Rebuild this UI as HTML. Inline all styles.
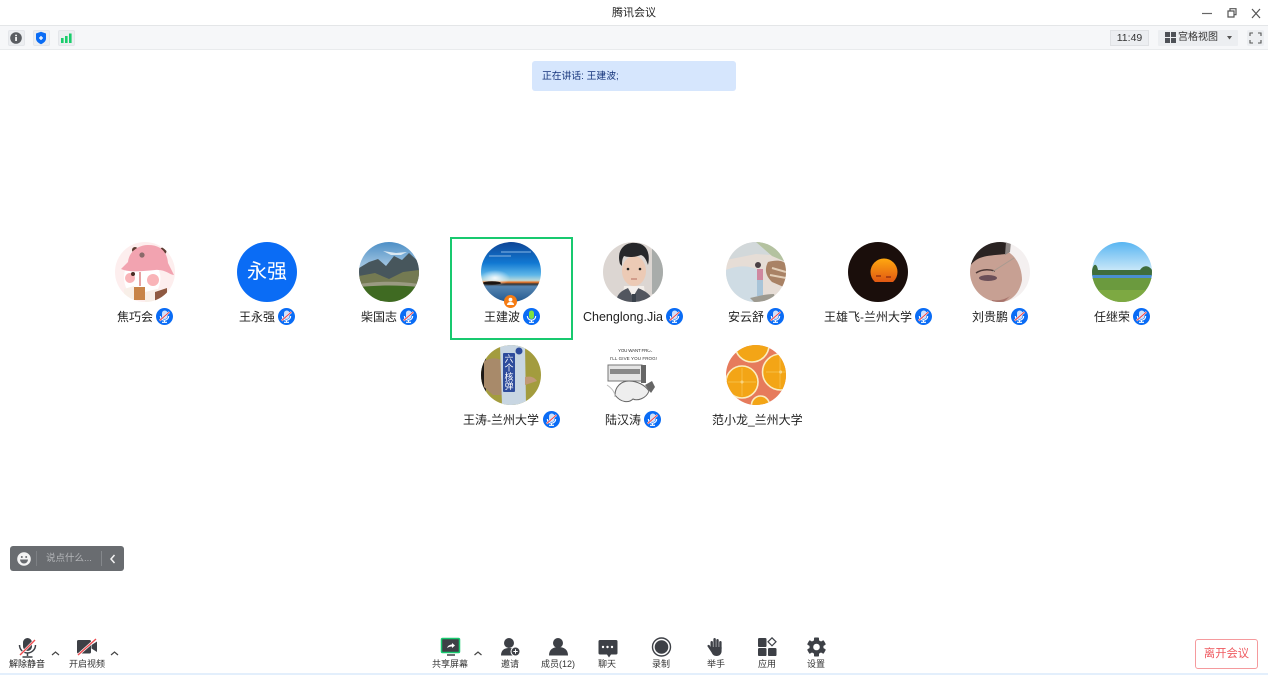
<!DOCTYPE html>
<html lang="zh"><head><meta charset="utf-8"><title>腾讯会议</title>
<style>
*{box-sizing:border-box}
html,body{margin:0;padding:0;width:1268px;height:675px;overflow:hidden;background:#fff;font-family:"Liberation Sans","Noto Sans CJK SC",sans-serif;color:#222}
.a{position:absolute}
.t{position:absolute;white-space:nowrap;line-height:14px}
.n{font-size:12px;color:#222;top:310px}
.n2{top:413px}
.l{font-size:9px;color:#333;top:658px;transform:translateX(-50%);line-height:12px}
.av{position:absolute;width:60px;height:60px;border-radius:50%;overflow:hidden}
.av svg{display:block}
.mic{position:absolute;width:17px;height:17px}
.ic{position:absolute}
.box{position:absolute;top:30px;width:17px;height:16px;background:#eceef1;border:1px solid #e4e6ea;border-radius:2px}
</style></head><body>
<svg width="0" height="0" style="position:absolute"><defs>
<symbol id="m" viewBox="0 0 17 17"><circle cx="8.5" cy="8.5" r="8.5" fill="#0a6cf5"/><rect x="6" y="2.500" width="5.500" height="8.500" rx="2.700" fill="#cfe0fb"/><path d="M4.300 8a4.200 4.200 0 0 0 8.400 0M8.500 12.300v1.800M6 14.300h5" stroke="#fff" stroke-width="1.100" fill="none"/><path d="M3.600 12.600 13.400 4" stroke="#fff" stroke-width="2"/><path d="M3.600 12.600 13.400 4" stroke="#e8474f" stroke-width="1.100"/></symbol>
</defs></svg>

<!-- title bar -->
<div class="a" style="left:0;top:0;width:1268px;height:26px;background:#fff;border-bottom:1px solid #e4e6e8"></div>
<div class="t" style="left:0;width:1268px;text-align:center;top:6px;font-size:11px;color:#222">腾讯会议</div>
<svg class="ic" style="left:1198px;top:5px" width="66" height="16"><path d="M4 8.500h10" stroke="#666" stroke-width="1.200"/><path d="M30 6h6v6h-6zM32 6V3.700h6v6h-2" stroke="#555" stroke-width="1.200" fill="none"/><path d="M54 4l8 9M62 4l-8 9" stroke="#555" stroke-width="1.200"/></svg>

<!-- toolbar -->
<div class="a" style="left:0;top:26px;width:1268px;height:24px;background:#f6f7f9;border-bottom:1px solid #e9ebed"></div>
<div class="box" style="left:8px"></div><div class="box" style="left:33px"></div><div class="box" style="left:58px"></div>
<svg class="ic" style="left:8px;top:30px" width="70" height="16">
<circle cx="8" cy="8" r="5.800" fill="#5a5d62"/><rect x="7.200" y="7" width="1.700" height="4" fill="#fff"/><rect x="7.200" y="4.700" width="1.700" height="1.500" fill="#fff"/>
<path d="M28 3.500l5-1.800 5 1.800v5c0 2.800-2.500 4.500-5 5.800-2.500-1.300-5-3-5-5.800z" fill="#0a6cf5"/><path d="M31 8h4M33 6v4" stroke="#fff" stroke-width="1.300"/>
<rect x="53" y="8" width="2.600" height="5" fill="#19cd6c"/><rect x="57" y="6" width="2.600" height="7" fill="#19cd6c"/><rect x="61" y="3.500" width="2.600" height="9.500" fill="#19cd6c"/></svg>

<div class="a" style="left:1110px;top:30px;width:39px;height:16px;background:#eceef1;border:1px solid #dfe1e4"></div>
<div class="t" style="left:1110px;width:39px;text-align:center;top:31px;font-size:10.500px;color:#333">11:49</div>
<div class="a" style="left:1158px;top:30px;width:80px;height:16px;background:#eceef1;border-radius:1px"></div>
<svg class="ic" style="left:1165px;top:32px" width="12" height="12"><path d="M0 0h5v5H0zM6 0h5v5H6zM0 6h5v5H0zM6 6h5v5H6z" fill="#4e5157"/></svg>
<div class="t" style="left:1178px;top:31px;font-size:10px;color:#333">宫格视图</div>
<svg class="ic" style="left:1226px;top:35px" width="8" height="6"><path d="M1 1h5L3.500 4.500z" fill="#555"/></svg>
<div class="a" style="left:1247px;top:30px;width:17px;height:16px;background:#eceef1;border-radius:2px"></div>
<svg class="ic" style="left:1247px;top:30px" width="17" height="16"><path d="M3 6V3h3M11 3h3v3M14 10v3h-3M6 13H3v-3" stroke="#555" stroke-width="1.100" fill="none"/></svg>

<!-- speaking -->
<div class="a" style="left:532px;top:61px;width:204px;height:30px;background:#d6e6fd;border-radius:3px"></div>
<div class="t" style="left:542px;top:69px;font-size:9.800px;line-height:15px;color:#16357c">正在讲话: 王建波;</div>

<!-- active frame -->
<div class="a" style="left:450px;top:237px;width:123px;height:103px;border:2px solid #18c96f"></div>

<!-- avatars row 1 -->
<div class="av" style="left:115px;top:242px"><svg width="60" height="60"><rect width="60" height="60" fill="#fdeeee"/><circle cx="20" cy="8" r="3" fill="#5a3a30"/><circle cx="48" cy="9" r="3.500" fill="#5a3a30"/><path d="M10 28c6-3 26-4 33-2 4 8 3 18-3 26H15c-6-7-7-16-5-24z" fill="#fff"/><path d="M6 27 13 20C14 9 24 3 33 3 46 3 52 10 53 21L59 33C55 33 50 27 40 28 28 29 15 31 6 27z" fill="#f2a3b0"/><circle cx="27" cy="13" r="2.600" fill="#8a6a6a"/><circle cx="15" cy="36" r="5" fill="#f9b4b8"/><circle cx="38" cy="38" r="6" fill="#f9b4b8"/><circle cx="18" cy="32" r="2" fill="#4a2c24"/><path d="M25 30v14" stroke="#c44" stroke-width="1"/><rect x="19" y="45" width="11" height="13" fill="#c88448"/><path d="M9 60V47l10-3v16z" fill="#f8efe8"/><path d="M30 60V50l12-3 4 2v11z" fill="#f8efe8"/><path d="M40 50l12-4v7l-12 6z" fill="#8f5a42"/></svg></div>
<div class="av" style="left:237px;top:242px;background:#0a6cf5;color:#fff;text-align:center;font-size:20px;line-height:60px">永强</div>
<div class="av" style="left:359px;top:242px"><svg width="60" height="60"><defs><linearGradient id="s1" x1="0" y1="0" x2="0" y2="1"><stop offset="0" stop-color="#4d8fc6"/><stop offset="1" stop-color="#b7d3e8"/></linearGradient></defs><rect width="60" height="30" fill="url(#s1)"/><path d="M24 9l13 2 11-1-6 3-10 0z" fill="#dce9f2"/><path d="M0 26 10 20 19 17 27 24 35 14 43 18 50 11 60 20V44H0z" fill="#47565c"/><path d="M0 34l16-3 14 6 14-7 16-2V46H0z" fill="#747a52"/><path d="M0 42c20-3 40-3 60 0v4H0z" fill="#9a9a82"/><path d="M0 45c20-2 40-2 60 0v15H0z" fill="#3f6a22"/></svg></div>
<div class="av" style="left:481px;top:242px"><svg width="60" height="60"><defs><linearGradient id="s2" x1="0" y1="0" x2="0" y2="1"><stop offset="0" stop-color="#0f4596"/><stop offset=".35" stop-color="#1178d2"/><stop offset=".55" stop-color="#5db6e8"/><stop offset=".64" stop-color="#b9d8d8"/><stop offset=".67" stop-color="#ef7a2a"/><stop offset=".70" stop-color="#333"/><stop offset=".74" stop-color="#5585b2"/><stop offset="1" stop-color="#23598f"/></linearGradient><radialGradient id="g2" cx=".5" cy=".5" r=".5"><stop offset="0" stop-color="#fff" stop-opacity=".9"/><stop offset="1" stop-color="#fff" stop-opacity="0"/></radialGradient></defs><rect width="60" height="60" fill="url(#s2)"/><ellipse cx="14" cy="36" rx="15" ry="8" fill="url(#g2)"/><ellipse cx="11" cy="41" rx="9" ry="1.800" fill="#1c1410"/><path d="M20 10h30M8 14h22" stroke="#5f9ad6" stroke-width="1.500"/></svg></div>
<div class="av" style="left:603px;top:242px"><svg width="60" height="60"><rect width="60" height="60" fill="#dcd6d2"/><rect x="49" y="6" width="11" height="46" fill="#a8acaa"/><path d="M21 44h20l2 16H19z" fill="#f3eee9"/><path d="M13 60c1-8 5-11 12-14l5 9 5-9c7 3 13 6 15 14z" fill="#52565f"/><path d="M26 45l5 8 5-8z" fill="#f3f0ee"/><rect x="29" y="52" width="4" height="8" fill="#39414b"/><ellipse cx="31" cy="29" rx="12" ry="15" fill="#eccab5"/><path d="M17 22C13 8 22 0 32 1 42 1 48 9 45 23 43 17 41 14 38 13 30 16 24 15 21 14 19 17 19 20 19 24z" fill="#26272a"/><circle cx="25" cy="27" r="1.300" fill="#222"/><circle cx="37" cy="27" r="1.300" fill="#222"/><path d="M28 37h6" stroke="#b76d60"/></svg></div>
<div class="av" style="left:725.500px;top:242px"><svg width="60" height="60"><rect width="60" height="60" fill="#e6ddd6"/><path d="M0 0h60v14L30 12 0 18z" fill="#d2d8da"/><path d="M0 28c14-6 28-4 34 2l-2 30H0z" fill="#cfdce4"/><path d="M30 0 60 0v20l-14-6z" fill="#b4c2a0"/><path d="M42 20c8-2 14-2 18 2v24l-14-6c-6-6-8-12-4-20z" fill="#a98265"/><path d="M46 26l14 4M44 33l16 3" stroke="#e3cfb8" stroke-width="2"/><circle cx="32" cy="23" r="3" fill="#4a4044"/><rect x="31" y="27" width="6" height="11" fill="#cf88a0"/><rect x="31" y="38" width="6" height="16" fill="#a8c4d8"/><path d="M24 56c8-2 16-4 24-4l2 8H28z" fill="#9d9a90"/></svg></div>
<div class="av" style="left:848px;top:242px"><svg width="60" height="60"><defs><linearGradient id="s3" x1="0" y1="0" x2="0" y2="1"><stop offset="0" stop-color="#ffa80f"/><stop offset="1" stop-color="#dc4c14"/></linearGradient></defs><rect width="60" height="60" fill="#1a0e0b"/><circle cx="36" cy="30" r="13.500" fill="url(#s3)"/><rect x="20" y="40" width="32" height="6" fill="#1a0e0b"/><path d="M28 34h5M38 35h5" stroke="#8a2a10" stroke-width="1.200"/></svg></div>
<div class="av" style="left:970px;top:242px"><svg width="60" height="60"><rect width="60" height="60" fill="#f4f0f0"/><path d="M0 60V22C10 12 25 10 38 10 46 14 52 26 52 38 50 50 42 60 30 60z" fill="#c7a093"/><path d="M0 24C8 13 18 14 36 12L38 0H0z" fill="#2a2322"/><path d="M36 0l-1 13 5-3 1-10z" fill="#8d8684"/><path d="M6 31C12 27 18 27 25 29" stroke="#4d3836" stroke-width="1.500" fill="none"/><ellipse cx="18" cy="36" rx="9" ry="3" fill="#6b4f58"/><path d="M22 30 44 16" stroke="#a89a90"/><path d="M22 58c6 1 12 0 18-4l-6 6H22z" fill="#a8746c"/></svg></div>
<div class="av" style="left:1092px;top:242px"><svg width="60" height="60"><defs><linearGradient id="s4" x1="0" y1="0" x2="0" y2="1"><stop offset="0" stop-color="#58b5f2"/><stop offset="1" stop-color="#cfeaf8"/></linearGradient></defs><rect width="60" height="30" fill="url(#s4)"/><path d="M0 28c2-8 5-6 6 0h42c3-5 9-5 12 0v6H0z" fill="#3f6d3c"/><rect y="33" width="60" height="4" fill="#4a8fd0"/><rect y="36" width="60" height="24" fill="#6b9a3e"/><path d="M0 48h60v12H0z" fill="#7da942"/></svg></div>

<!-- avatars row 2 -->
<div class="av" style="left:481px;top:345px"><svg width="60" height="60"><rect width="60" height="60" fill="#a39c3e"/><rect width="5" height="60" fill="#1c1816"/><path d="M3 16c8-4 14-3 19 0v34l-10 0-9-8z" fill="#a88a6a"/><path d="M19 0h25l1 60H21z" fill="#c8d6e2"/><rect x="22" y="8" width="12" height="39" rx="1" fill="#2e4c9c"/><text x="28" y="17" font-size="9" fill="#fff" text-anchor="middle">六</text><text x="28" y="26" font-size="9" fill="#fff" text-anchor="middle">个</text><text x="28" y="35" font-size="9" fill="#fff" text-anchor="middle">核</text><text x="28" y="44" font-size="9" fill="#fff" text-anchor="middle">弹</text><circle cx="38" cy="6" r="3.500" fill="#2e4c9c"/><path d="M44 32c6-1 9 0 12 4l-12 4z" fill="#c19a78"/></svg></div>
<div class="av" style="left:603px;top:345px"><svg width="60" height="60"><rect width="60" height="60" fill="#fff"/><text x="15" y="7" font-size="4.500" fill="#333" textLength="37">YOU WANT FROG,</text><text x="7" y="15" font-size="4.500" fill="#333" textLength="47">I'LL GIVE YOU FROG!</text><path d="M5 20h34v16H5z" fill="#e4e4e4" stroke="#777"/><path d="M7 24h30v5H7z" fill="#888"/><rect x="38" y="20" width="5" height="18" fill="#666"/><path d="M12 50c0-8 6-14 14-14s16 4 20 10c-3 8-12 10-16 8-4 4-12 4-18-4z" fill="#eee" stroke="#666"/><path d="M42 40l7-4 3 6-4 6z" fill="#666"/><path d="M4 40c6 4 8 8 8 12" stroke="#bbb" fill="none"/></svg></div>
<div class="av" style="left:725.500px;top:345px"><svg width="60" height="60"><rect width="60" height="60" fill="#e67b5c"/><g stroke="#fbeec0" stroke-width="1.600" fill="#f3a516"><circle cx="26" cy="0" r="17"/><circle cx="16" cy="37" r="16"/><circle cx="54.500" cy="27" r="18"/><circle cx="34.500" cy="60" r="9"/></g><circle cx="16" cy="37" r="1.500" fill="#f8e6b5"/><circle cx="54.500" cy="27" r="1.500" fill="#f8e6b5"/><path d="M16 23v28M2 37h28M54 11v32M40 27h20" stroke="#f8c658" stroke-width=".7"/></svg></div>

<!-- presenter badge -->
<div class="a" style="left:504px;top:295px;width:13px;height:13px;border-radius:50%;background:#f57c14"></div>
<svg class="ic" style="left:504px;top:295px" width="13" height="13"><circle cx="6.500" cy="4.700" r="1.900" fill="#fff"/><path d="M3 10c0-2 1.500-3 3.500-3s3.500 1 3.500 3z" fill="#fff"/></svg>

<!-- names row 1 -->
<div class="t n" style="left:117px">焦巧会</div><svg class="mic" style="left:156px;top:308px"><use href="#m"/></svg>
<div class="t n" style="left:239px">王永强</div><svg class="mic" style="left:278px;top:308px"><use href="#m"/></svg>
<div class="t n" style="left:361px">柴国志</div><svg class="mic" style="left:400px;top:308px"><use href="#m"/></svg>
<div class="t n" style="left:484px">王建波</div>
<svg class="mic" style="left:523px;top:308px" viewBox="0 0 17 17"><circle cx="8.500" cy="8.500" r="8.500" fill="#0a6cf5"/><rect x="6" y="2.500" width="5" height="8.500" rx="2.500" fill="#7fe23f"/><path d="M4.300 8a4.200 4.200 0 0 0 8.400 0M8.500 12.300v1.700M6 14.300h5" stroke="#fff" stroke-width="1.100" fill="none"/></svg>
<div class="t n" style="left:583px;font-size:12.500px">Chenglong.Jia</div><svg class="mic" style="left:666px;top:308px"><use href="#m"/></svg>
<div class="t n" style="left:728px">安云舒</div><svg class="mic" style="left:767px;top:308px"><use href="#m"/></svg>
<div class="t n" style="left:824px">王雄飞-兰州大学</div><svg class="mic" style="left:915px;top:308px"><use href="#m"/></svg>
<div class="t n" style="left:972px">刘贵鹏</div><svg class="mic" style="left:1011px;top:308px"><use href="#m"/></svg>
<div class="t n" style="left:1094px">任继荣</div><svg class="mic" style="left:1133px;top:308px"><use href="#m"/></svg>

<!-- names row 2 -->
<div class="t n n2" style="left:463px">王涛-兰州大学</div><svg class="mic" style="left:543px;top:411px"><use href="#m"/></svg>
<div class="t n n2" style="left:605px">陆汉涛</div><svg class="mic" style="left:644px;top:411px"><use href="#m"/></svg>
<div class="t n n2" style="left:712px">范小龙_兰州大学</div>

<!-- chat pill -->
<div class="a" style="left:10px;top:546px;width:114px;height:25px;background:#696c70;border-radius:3px"></div>
<div class="a" style="left:36px;top:551px;width:1px;height:15px;background:#7d8084"></div>
<div class="a" style="left:101px;top:551px;width:1px;height:15px;background:#85888c"></div>
<svg class="ic" style="left:16px;top:552px" width="16" height="14"><circle cx="8" cy="7" r="6.800" fill="#f4f4f4"/><circle cx="5.800" cy="5" r="1" fill="#696c70"/><circle cx="10.200" cy="5" r="1" fill="#696c70"/><path d="M4 7.500h8a4 4 0 0 1-8 0z" fill="#696c70"/></svg>
<div class="t" style="left:46px;top:552px;font-size:9.500px;color:#b5b7ba">说点什么...</div>
<svg class="ic" style="left:108px;top:553px" width="10" height="12"><path d="M6.500 2 3 6l3.500 4" stroke="#f4f4f4" stroke-width="1.500" fill="none"/></svg>

<!-- bottom bar -->
<div class="a" style="left:0;top:673px;width:1268px;height:2px;background:#e3effc"></div>

<svg class="ic" style="left:0;top:634px" width="130" height="24" fill="#3d4046">
<rect x="23" y="4" width="9" height="13" rx="4.500"/><path d="M19.500 11a8 8 0 0 0 16 0" stroke="#3d4046" stroke-width="1.500" fill="none"/><path d="M27.500 19v3" stroke="#3d4046" stroke-width="1.500"/><path d="M22.500 23h10" stroke="#3d4046" stroke-width="1.500"/><path d="M20 21 35 6" stroke="#fff" stroke-width="2.600"/><path d="M20 21 35 6" stroke="#ee4c50" stroke-width="1.400"/>
<path d="M52 21l3.500-3 3.500 3" stroke="#444" stroke-width="1.200" fill="none"/>
<rect x="77" y="6" width="14" height="13.500" rx="1.500"/><path d="M91.500 11l5.500-3.500v10.500l-5.500-3.500z"/><path d="M78 21 96 5" stroke="#fff" stroke-width="2.600"/><path d="M78 21 96 5" stroke="#ee4c50" stroke-width="1.400"/>
<path d="M111 21l3.500-3 3.500 3" stroke="#444" stroke-width="1.200" fill="none"/>
</svg>
<div class="t l" style="left:27px;color:#222">解除静音</div>
<div class="t l" style="left:87px">开启视频</div>

<svg class="ic" style="left:425px;top:634px" width="410" height="24">
<rect x="16.500" y="4.500" width="18" height="14" rx="1" fill="#3d4046" stroke="#18c96f" stroke-width="1.500"/><path d="M22 21h8" stroke="#3d4046" stroke-width="1.500"/><path d="M22 14c1-2.500 3-3.500 5-3.500V9l3 2.500-3 2.500v-1.500c-2 0-3.500.6-5 1.500z" fill="#fff"/>
<path d="M49.500 21l3.500-3 3.500 3" stroke="#444" stroke-width="1.200" fill="none"/>
<circle cx="84" cy="9" r="5" fill="#3d4046"/><path d="M76 21.500c0-5 3-7.500 8-7.500 3 0 5 1 7 2.500v5z" fill="#3d4046"/><circle cx="90.500" cy="17.500" r="4.500" fill="#3d4046" stroke="#fff"/><path d="M88.300 17.500h4.400M90.500 15.300v4.400" stroke="#fff"/>
<circle cx="133" cy="9" r="5" fill="#3d4046"/><path d="M124 21.500c0-6 4-8.500 9.500-8.500s9.500 2.500 9.500 8.500z" fill="#3d4046"/>
<path d="M175 6h16a1.500 1.500 0 0 1 1.500 1.500V19a1.500 1.500 0 0 1-1.500 1.500h-5l-2 3-2-3h-7a1.500 1.500 0 0 1-1.500-1.500V7.500A1.500 1.500 0 0 1 175 6z" fill="#3d4046"/><circle cx="178" cy="13" r="1.200" fill="#fff"/><circle cx="182.500" cy="13" r="1.200" fill="#fff"/><circle cx="187" cy="13" r="1.200" fill="#fff"/>
<circle cx="236.500" cy="13" r="9" fill="#fff" stroke="#3d4046" stroke-width="1.400"/><circle cx="236.500" cy="13" r="6.800" fill="#3d4046"/>
<g fill="#3d4046"><rect x="285.500" y="7" width="2.400" height="9" rx="1.200"/><rect x="288.400" y="4" width="2.400" height="10" rx="1.200"/><rect x="291.300" y="5" width="2.400" height="9" rx="1.200"/><rect x="294.200" y="7" width="2.400" height="9" rx="1.200"/><path d="M285.500 13h11.100v4c0 3-2 5-5 5s-4-1.500-5-3.500l-4-6c-.7-1.200 1-2.300 2-1.200z"/></g>
<rect x="333" y="4" width="8.500" height="9" rx="1.300" fill="#3d4046"/><rect x="333" y="14" width="8.500" height="8" rx="1.300" fill="#3d4046"/><rect x="343" y="14" width="8.500" height="8" rx="1.300" fill="#3d4046"/><path d="M347 3.800l4 4-4 4-4-4z" fill="#fff" stroke="#3d4046" stroke-width="1.200"/>
<g transform="translate(391.500 13)" fill="#3d4046"><circle r="7"/><rect x="-2.500" y="-9.500" width="5" height="19" rx=".8"/><rect x="-2.500" y="-9.500" width="5" height="19" rx=".8" transform="rotate(60)"/><rect x="-2.500" y="-9.500" width="5" height="19" rx=".8" transform="rotate(120)"/><circle r="3.300" fill="#fff"/></g>
</svg>
<div class="t l" style="left:450px">共享屏幕</div>
<div class="t l" style="left:510px">邀请</div>
<div class="t l" style="left:558px">成员(12)</div>
<div class="t l" style="left:607px">聊天</div>
<div class="t l" style="left:661px">录制</div>
<div class="t l" style="left:716px">举手</div>
<div class="t l" style="left:767px">应用</div>
<div class="t l" style="left:816px">设置</div>

<div class="a" style="left:1195px;top:639px;width:63px;height:30px;border:1px solid #f59a9d;border-radius:3px;background:#fff"></div>
<div class="t" style="left:1195px;width:63px;text-align:center;top:647px;font-size:11.300px;color:#ef5a60">离开会议</div>
</body></html>
